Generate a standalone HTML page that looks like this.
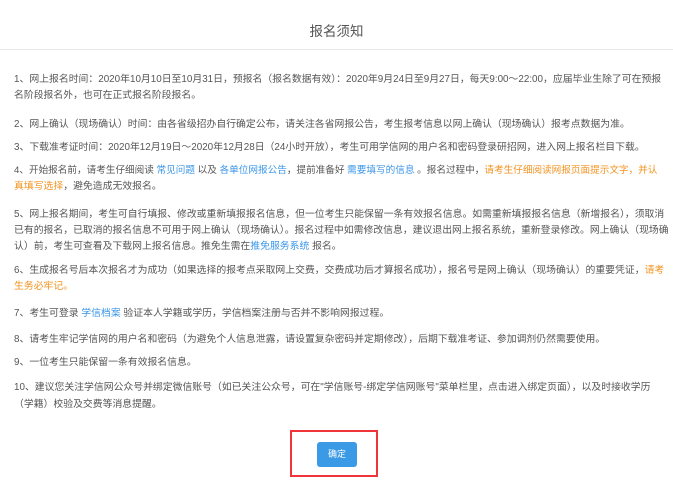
<!DOCTYPE html>
<html><head><meta charset="utf-8"><style>
body{margin:0;width:673px;height:487px;background:#fff;font-family:"Liberation Sans","Noto Sans CJK SC",sans-serif;color:#555;overflow:hidden;position:relative}
.t{position:absolute;left:0;width:673px;top:20px;text-align:center;font-size:13.5px;color:#555}
.hr{position:absolute;left:0;width:673px;top:49px;height:1px;background:#e8e8e8}
.l{position:absolute;left:14px;font-size:9.85px;white-space:nowrap;line-height:12px}
.b{color:#3a96e8}.o{color:#f39422}
.red{position:absolute;left:290px;top:430px;width:84px;height:43px;border:2px solid #f0353a}
.btn{position:absolute;left:317px;top:442px;width:40px;height:25px;background:#3a9ae6;border-radius:3px;color:#fff;font-size:9px;line-height:25px;text-align:center}
</style></head><body>
<div class="t">报名须知</div>
<div class="hr"></div>
<div class="l" style="top:74px">1、网上报名时间：2020年10月10日至10月31日，预报名（报名数据有效）：2020年9月24日至9月27日，每天9:00～22:00，应届毕业生除了可在预报</div>
<div class="l" style="top:90px">名阶段报名外，也可在正式报名阶段报名。</div>
<div class="l" style="top:119px">2、网上确认（现场确认）时间：由各省级招办自行确定公布，请关注各省网报公告，考生报考信息以网上确认（现场确认）报考点数据为准。</div>
<div class="l" style="top:142px">3、下载准考证时间：2020年12月19日～2020年12月28日（24小时开放），考生可用学信网的用户名和密码登录研招网，进入网上报名栏目下载。</div>
<div class="l" style="top:165px;font-size:9.62px">4、开始报名前，请考生仔细阅读 <span class="b">常见问题</span> 以及 <span class="b">各单位网报公告</span>，提前准备好 <span class="b">需要填写的信息</span> 。报名过程中，<span class="o">请考生仔细阅读网报页面提示文字，并认</span></div>
<div class="l o" style="top:181px">真填写选择<span style="color:#555">，避免造成无效报名。</span></div>
<div class="l" style="top:209px">5、网上报名期间，考生可自行填报、修改或重新填报报名信息，但一位考生只能保留一条有效报名信息。如需重新填报报名信息（新增报名），须取消</div>
<div class="l" style="top:225px">已有的报名，已取消的报名信息不可用于网上确认（现场确认）。报名过程中如需修改信息，建议退出网上报名系统，重新登录修改。网上确认（现场确</div>
<div class="l" style="top:241px">认）前，考生可查看及下载网上报名信息。推免生需在<span class="b">推免服务系统</span> 报名。</div>
<div class="l" style="top:265px">6、生成报名号后本次报名才为成功（如果选择的报考点采取网上交费，交费成功后才算报名成功），报名号是网上确认（现场确认）的重要凭证，<span class="o">请考</span></div>
<div class="l o" style="top:281px">生务必牢记。</div>
<div class="l" style="top:308px">7、考生可登录 <span class="b">学信档案</span> 验证本人学籍或学历，学信档案注册与否并不影响网报过程。</div>
<div class="l" style="top:334px">8、请考生牢记学信网的用户名和密码（为避免个人信息泄露，请设置复杂密码并定期修改），后期下载准考证、参加调剂仍然需要使用。</div>
<div class="l" style="top:357px">9、一位考生只能保留一条有效报名信息。</div>
<div class="l" style="top:382px">10、建议您关注学信网公众号并绑定微信账号（如已关注公众号，可在"学信账号-绑定学信网账号"菜单栏里，点击进入绑定页面），以及时接收学历</div>
<div class="l" style="top:399px">（学籍）校验及交费等消息提醒。</div>
<div class="red"></div>
<div class="btn">确定</div>
</body></html>
